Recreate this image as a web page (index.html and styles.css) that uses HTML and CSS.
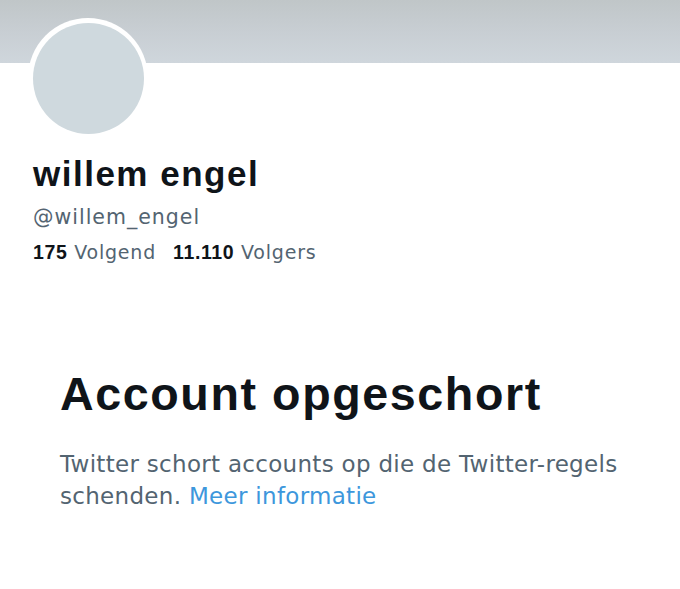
FILE: index.html
```html
<!DOCTYPE html>
<html lang="nl">
<head>
<meta charset="utf-8">
<link rel="stylesheet" href="styles.css">
</head>
<body>
<div class="banner"></div>
<div class="profile">
  <div class="avatar"><div class="avatar-inner"></div></div>
  <div class="name">willem engel</div>
  <div class="handle">@willem_engel</div>
  <div class="stats">
    <span class="stat"><b>175</b> Volgend</span>
    <span class="stat"><b>11.110</b> Volgers</span>
  </div>
</div>
<div class="suspended">
  <h1 class="title">Account opgeschort</h1>
  <p class="desc"><span class="desc-text">Twitter schort accounts op die de Twitter-regels schenden.</span> <a class="link" href="#">Meer informatie</a></p>
</div>
</body>
</html>
```
FILE: styles.css
```css
html, body {
  margin: 0;
  padding: 0;
  background: #ffffff;
  font-family: "DejaVu Sans", "Liberation Sans", sans-serif;
  color: #0f1419;
}
.banner {
  height: 63px;
  background: linear-gradient(to bottom, #c0c6c8 0%, #c8ced3 50%, #cfd6dc 100%);
}
.profile {
  padding-left: 28px;
}
.avatar {
  width: 120px;
  height: 120px;
  margin-top: -45px;
  border-radius: 50%;
  background: #ffffff;
  display: flex;
  align-items: center;
  justify-content: center;
}
.avatar-inner {
  width: 111px;
  height: 111px;
  border-radius: 50%;
  background: #cfd9de;
}
.name {
  margin-top: 16px;
  padding-left: 5px;
  font-family: "Liberation Sans", Arial, sans-serif;
  font-size: 35px;
  line-height: 40px;
  font-weight: 700;
  letter-spacing: 1.5px;
}
.handle {
  margin-top: 8px;
  padding-left: 5px;
  font-size: 20.5px;
  line-height: 30px;
  color: #536471;
  letter-spacing: 1px;
}
.stats {
  margin-top: 6.5px;
  padding-left: 5px;
  font-size: 19px;
  line-height: 26px;
  color: #536471;
  display: flex;
  gap: 17px;
  letter-spacing: 0.8px;
}
.stat b {
  font-family: "Liberation Sans", Arial, sans-serif;
  font-size: 19.5px;
  color: #0f1419;
  font-weight: 700;
  letter-spacing: 0.6px;
}
.suspended {
  padding-left: 60px;
  margin-top: 101px;
}
.title {
  margin: 0;
  font-family: "Liberation Sans", Arial, sans-serif;
  font-size: 46.6px;
  line-height: 56px;
  font-weight: 700;
  letter-spacing: 1.6px;
}
.desc {
  margin: 26px 0 0;
  font-size: 23px;
  line-height: 32px;
  color: #536471;
  letter-spacing: 0.3px;
  max-width: 610px;
}
.link {
  color: #3d97dc;
  text-decoration: none;
}
```
